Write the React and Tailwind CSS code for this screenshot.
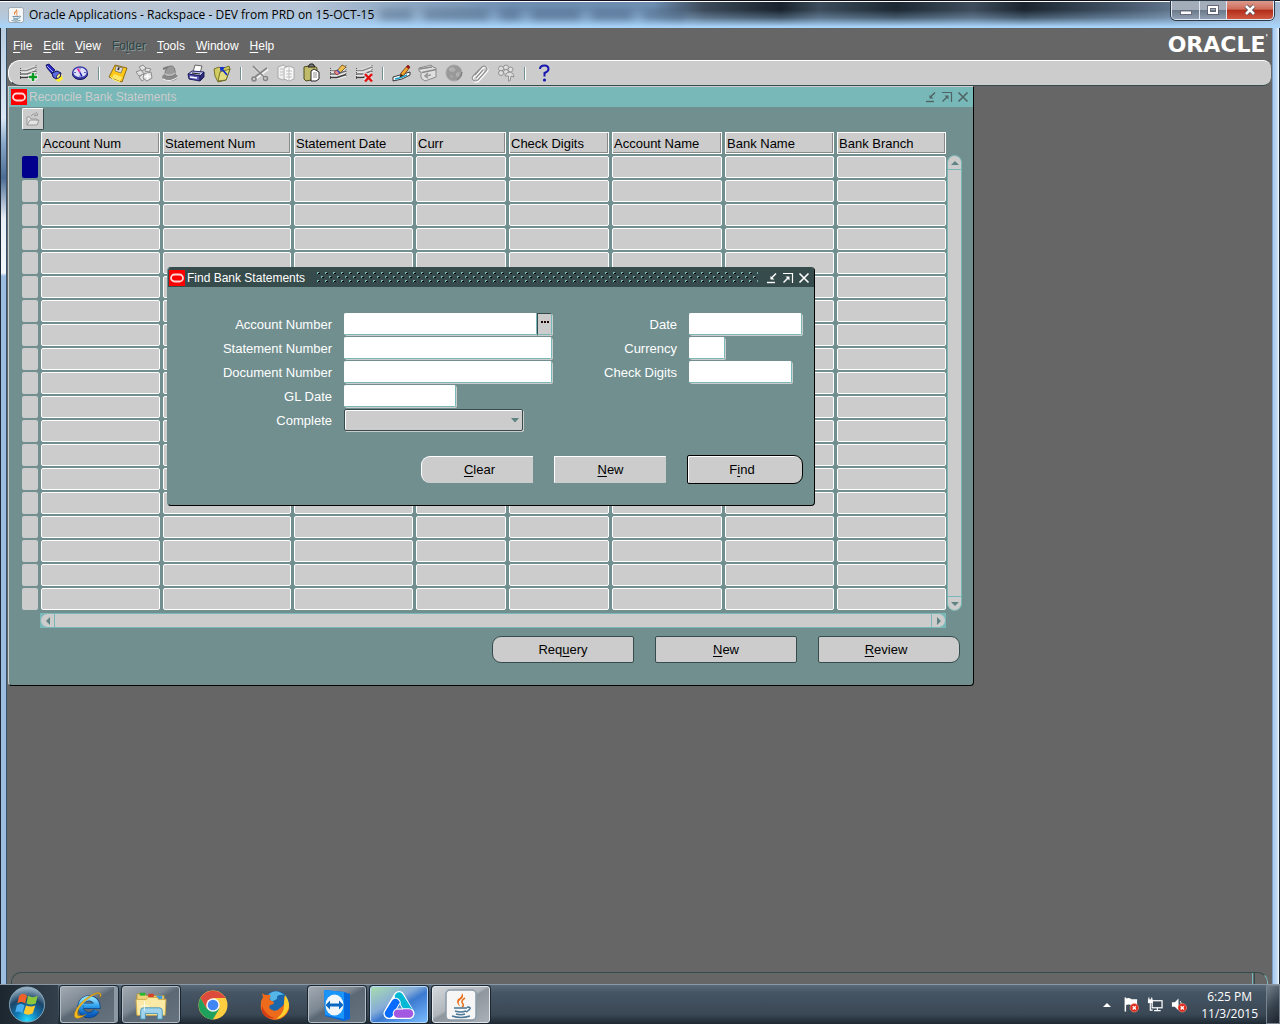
import React from "react";

const svgProps = { viewBox: "0 0 20 20", className: "block h-5 w-5", "aria-hidden": true };

/* ---------- toolbar icons ---------- */
const Sheet = () => (
  <g>
    <path d="M2 6 L10 5.500 L18 2 V14 L11 16 H2Z" fill="#e8e8e8" />
    <path d="M2 7.500H9L18 4" stroke="#8c8c8c" strokeWidth="1.600" fill="none" />
    <path d="M2 11H9L18 8" stroke="#6e6e6e" strokeWidth="1.600" fill="none" />
    <path d="M2 14.500H9L18 11.500" stroke="#3c3c3c" strokeWidth="1.600" fill="none" />
    <path d="M2.500 5V17" stroke="#555" strokeDasharray="1 1" />
    <path d="M18 2V14" stroke="#666" strokeDasharray="1 1" />
  </g>
);
const ICONS = {
  New: (
    <svg {...svgProps}>
      <Sheet />
      <path d="M15 9.500V18.500M10.500 14H19.500" stroke="#fff" strokeWidth="4.500" />
      <path d="M15 10V18M11 14H19" stroke="#0a9a22" strokeWidth="2.600" />
    </svg>
  ),
  Find: (
    <svg {...svgProps}>
      <path d="M11 17L17 11L19 16L15 19Z" fill="#ffee30" />
      <path d="M2 2L5 1L11 7L8 11L3 5Z" fill="#2828c0" stroke="#10105a" strokeWidth=".8" />
      <path d="M8 10L13 8L17 10L16 14L12 16L9 14Z" fill="#5a6ae0" stroke="#10105a" />
      <path d="M3 3L9 9" stroke="#aab4ff" />
      <ellipse cx="14.500" cy="13" rx="2.800" ry="1.500" transform="rotate(-50 14.500 13)" fill="#fff27a" stroke="#10105a" strokeWidth=".7" />
    </svg>
  ),
  Navigator: (
    <svg {...svgProps}>
      <ellipse cx="10" cy="11" rx="7.500" ry="5.500" fill="#3434a0" stroke="#15155c" />
      <ellipse cx="10" cy="9.500" rx="7.200" ry="5.500" fill="#dce0fa" stroke="#3a3aa6" strokeWidth="1.300" />
      <path d="M10 4.500V6.500M10 12.500V14.500M4 9.500H6M14 9.500H16" stroke="#5a60b8" />
      <path d="M7.500 5.500L10 9.500" stroke="#e030a0" strokeWidth="1.800" />
      <path d="M10 9.500L12 13.500" stroke="#2020b0" strokeWidth="1.600" />
    </svg>
  ),
  Save: (
    <svg {...svgProps}>
      <path d="M7 2L19 5L14 19L1 14Z" fill="#ffc818" stroke="#7a5500" strokeWidth=".8" />
      <path d="M8 3L15 5L13 10L7 8Z" fill="#d8d8d8" stroke="#555" strokeWidth=".6" />
      <path d="M11 4.500L10 7" stroke="#222" strokeWidth="1.600" />
      <path d="M6 11L14 14L12 18L4 15Z" fill="#ffe868" />
      <path d="M2 13L6 17L12 19" stroke="#fff060" fill="none" />
    </svg>
  ),
  "Next Step": (
    <svg {...svgProps}>
      <g fill="#e2e2e2" stroke="#8d8d8d">
        <path d="M5 4L9 2L12 5L8 8Z" /><path d="M12 5L17 6L15 9L11 8Z" />
        <path d="M2 9L7 7L10 11L5 13Z" /><path d="M5 14L9 11L12 15L8 18Z" /><path d="M10 11L17 9L18 15L13 18L9 15Z" />
      </g>
      <path d="M10.500 13.500H16.500M13.500 10.500V16.500" stroke="#fff" strokeWidth="1.600" />
    </svg>
  ),
  "Switch Responsibility": (
    <svg {...svgProps}>
      <ellipse cx="10" cy="14" rx="8" ry="4" fill="#8a8a8a" />
      <path d="M5 12Q5 4 10 3Q16 2 15 12Q12 15 5 12Z" fill="#9a9a9a" stroke="#7a7a7a" />
      <path d="M5 11Q10 14 15 10" stroke="#bcbcbc" strokeWidth="1.500" fill="none" />
      <path d="M3 16Q10 20 18 14" stroke="#f2f2f2" fill="none" /><path d="M3 6L8 4" stroke="#7a7a7a" strokeWidth="2" />
    </svg>
  ),
  Print: (
    <svg {...svgProps}>
      <path d="M7 9L9 2L16 3L14 10Z" fill="#fff" stroke="#444" strokeWidth=".8" />
      <path d="M2 11L6 8L18 9L15 13Z" fill="#bcc0e8" stroke="#26266e" />
      <path d="M2 11L14 13V18L3 16Z" fill="#5858b4" stroke="#1c1c5c" />
      <path d="M14 13L18 9V14L14 18Z" fill="#2c2c78" stroke="#1c1c5c" />
      <path d="M4 14L11 15" stroke="#fff" strokeWidth="1.400" /><path d="M6 10L14 11" stroke="#222" />
    </svg>
  ),
  "Close Form": (
    <svg {...svgProps}>
      <path d="M2 6L7 4L9 6L17 3L18 6L14 17L6 19L3 13Z" fill="#d2cc60" stroke="#605c18" strokeWidth=".8" />
      <path d="M6 18L8 9L18 6L14 17Z" fill="#e2dc7c" stroke="#605c18" strokeWidth=".8" />
      <path d="M15 12L10 6" stroke="#1030d0" strokeWidth="1.800" /><path d="M8 4H13L8.500 9Z" fill="#1030d0" />
    </svg>
  ),
  Cut: (
    <svg {...svgProps}>
      <path d="M3 3L14 14M17 5L5 14" stroke="#f4f4f4" strokeWidth="2.500" transform="translate(1 1)" />
      <path d="M3 3L14 14M17 5L5 14" stroke="#858585" strokeWidth="1.700" />
      <circle cx="15.500" cy="15.500" r="2" fill="none" stroke="#858585" strokeWidth="1.500" />
      <circle cx="4" cy="16" r="2" fill="none" stroke="#858585" strokeWidth="1.500" />
    </svg>
  ),
  Copy: (
    <svg {...svgProps}>
      <path d="M2 4L7 2L11 4V15L7 17L2 15Z" fill="#f0f0f0" stroke="#9a9a9a" strokeWidth=".8" />
      <path d="M8 5L13 3L18 5V16L13 18L8 16Z" fill="#f8f8f8" stroke="#9a9a9a" strokeWidth=".8" />
      <path d="M4 6H7M4 9H7M4 12H7M10 8H16M10 11H16M10 14H16M13 4V17" stroke="#b4b4b4" strokeWidth=".8" />
    </svg>
  ),
  Paste: (
    <svg {...svgProps}>
      <path d="M2 4L11 2L15 5L14 16L4 18L2 16Z" fill="#c0bb68" stroke="#4c4a20" />
      <path d="M6 4L8 1H11L13 4Z" fill="#777" stroke="#222" />
      <path d="M9 8L12 6L17 9V16L14 18H9Z" fill="#fff" stroke="#222" />
      <path d="M11 10H15M11 12H15M11 14H15" stroke="#777" strokeWidth=".8" />
    </svg>
  ),
  "Clear Record": (
    <svg {...svgProps}>
      <Sheet />
      <path d="M8 9L14 2L18 4L11 11Z" fill="#f0bd50" stroke="#6b4a18" strokeWidth=".8" />
      <path d="M6 9L9 7L12 10L9 12Z" fill="#e88a8a" stroke="#883a3a" strokeWidth=".8" /><path d="M9 7L12 10" stroke="#3050c0" strokeWidth="1.500" />
    </svg>
  ),
  Delete: (
    <svg {...svgProps}>
      <Sheet />
      <path d="M10 10L18 18M18 10L10 18" stroke="#ddd" strokeWidth="4" />
      <path d="M11 11L18 18.500M18 11L11 18.500" stroke="#e01010" strokeWidth="2.400" />
    </svg>
  ),
  "Edit Field": (
    <svg {...svgProps}>
      <path d="M1 14L8 12L18 9V12L10 16L1 18Z" fill="#fff" stroke="#222" strokeWidth=".9" />
      <path d="M3 16L9 14.500L15 12" stroke="#1aa0cc" strokeWidth="1.400" fill="none" />
      <path d="M8 14L9 10L16 2L18 4L12 12Z" fill="#f4a52e" stroke="#5a3210" strokeWidth=".8" />
      <path d="M14 4L16 2L18 4L16.500 6Z" fill="#a01818" /><path d="M8 14L9 11L11 12.500Z" fill="#222" />
    </svg>
  ),
  Zoom: (
    <svg {...svgProps}>
      <path d="M1 5L13 2L15 4L18 5V14L7 18L3 15V9L1 8Z" fill="#e0e0e0" stroke="#8a8a8a" />
      <path d="M1 6L14 4M4 9.500L18 6.500" stroke="#8a8a8a" strokeWidth="1.600" /><path d="M7 13L13 12M10 10L7 13L10 15" stroke="#999" strokeWidth="1.600" fill="none" />
    </svg>
  ),
  Translations: (
    <svg {...svgProps}>
      <circle cx="10" cy="10" r="8" fill="#999" stroke="#a8a8a8" />
      <path d="M5 5L9 4L12 7L9 9L5 8Z M12 10L16 9L15 13L12 14Z" fill="#b0b0b0" /><path d="M6 12L9 13L8 16Z" fill="#acacac" />
      <path d="M13 17Q18 14 18 9" stroke="#7a7a7a" fill="none" />
    </svg>
  ),
  Attachments: (
    <svg {...svgProps}>
      <path d="M5 12L12 4Q14 2 16 4Q18 6 16 8L8 17Q5 19 3 17Q1 15 4 12L11 5M6 15L13 7" fill="none" stroke="#fff" strokeWidth="2" transform="translate(.6 .8)" />
      <path d="M5 12L12 4Q14 2 16 4Q18 6 16 8L8 17Q5 19 3 17Q1 15 4 12L11 5M6 15L13 7" fill="none" stroke="#909090" strokeWidth="1.200" />
    </svg>
  ),
  "Folder Tools": (
    <svg {...svgProps}>
      <g fill="#dedede" stroke="#8c8c8c" strokeWidth=".9">
        <circle cx="5" cy="5.500" r="2.500" /><circle cx="10" cy="4.500" r="2.500" /><circle cx="14.500" cy="6.500" r="2.500" />
        <circle cx="5" cy="10" r="2.500" /><circle cx="10" cy="9" r="2.500" />
        <path d="M9 13Q10 9 14 9Q18 10 18 14L15 13L14 18H12.500V13Z" />
      </g>
    </svg>
  ),
  Help: (
    <svg {...svgProps}>
      <path d="M6 6Q6 2.500 10.500 2.500Q14.500 2.500 14.500 6Q14.500 8.500 10.500 10V13.500" fill="none" stroke="#1818b0" strokeWidth="2" />
      <circle cx="10.500" cy="17" r="1.600" fill="#1818b0" />
    </svg>
  ),
};
const TOOL_GROUPS = [
  ["New", "Find", "Navigator"],
  ["Save", "Next Step", "Switch Responsibility", "Print", "Close Form"],
  ["Cut", "Copy", "Paste", "Clear Record", "Delete"],
  ["Edit Field", "Zoom", "Translations", "Attachments", "Folder Tools"],
  ["Help"],
];

/* ---------- shared pieces ---------- */
const JavaCup = ({ className }) => (
  <svg viewBox="0 0 32 32" className={className} aria-hidden="true">
    <rect x="1" y="1" width="30" height="30" rx="4" fill="#f6f6f6" stroke="#8a99a8" strokeWidth="1.500" />
    <path d="M17 4Q20 8 15 11Q12 14 16 18Q10 14 13 10Q17 8 17 4Z" fill="#e8701a" />
    <path d="M20 9Q15 12 18 15Q19 17 17 18" fill="none" stroke="#e8701a" strokeWidth="1.500" />
    <path d="M9 19H22M10 22Q16 24 21 22M11 25Q16 26.500 20 25M7 27Q16 30 25 27M22 18Q27 18 24 21Q23 22 21 23" fill="none" stroke="#4a7896" strokeWidth="1.500" />
  </svg>
);

const OracleBadge = () => (
  <svg viewBox="0 0 16 16" className="h-4 w-4 shrink-0" aria-hidden="true">
    <rect width="16" height="16" fill="#f00" />
    <rect x="2" y="4.500" width="12" height="7" rx="3.500" fill="none" stroke="#ffd8d8" strokeWidth="1.800" />
  </svg>
);

const WindowControls = ({ className }) => (
  <div className={`flex gap-1 ${className}`}>
    <button type="button" aria-label="Minimize">
      <svg viewBox="0 0 12 12" className="h-3 w-3"><path d="M1 10.500H9" stroke="currentColor" strokeWidth="1.400" /><path d="M10 1.500L5 6.500" stroke="currentColor" strokeWidth="1.400" /><path d="M4.500 4V7.500H8.500Z" fill="currentColor" /></svg>
    </button>
    <button type="button" aria-label="Maximize">
      <svg viewBox="0 0 12 12" className="h-3 w-3"><path d="M1 1.500H10.500V11" fill="none" stroke="currentColor" strokeWidth="1.200" /><path d="M1.500 10.500L6 6" stroke="currentColor" strokeWidth="1.400" /><path d="M3.500 4.500H7.500V8.500Z" fill="currentColor" /></svg>
    </button>
    <button type="button" aria-label="Close">
      <svg viewBox="0 0 12 12" className="h-3 w-3"><path d="M1.500 1.500L10.500 10.500M10.500 1.500L1.500 10.500" stroke="currentColor" strokeWidth="1.600" /></svg>
    </button>
  </div>
);

const Mnemonic = ({ text, at }) => (
  <span>{text.slice(0, at)}<u className="underline underline-offset-2">{text[at]}</u>{text.slice(at + 1)}</span>
);

/* ---------- title bar ---------- */
function TitleBar() {
  return (
    <header className="relative flex h-7 items-start border-t border-[#10101c] bg-[linear-gradient(90deg,#b9c5d2_0%,#b4c4d6_24%,#8fa9c4_31%,#6f8fb2_40%,#6f8fb2_51%,#3c4a5a_55%,#18222c_61%,#3c4c5c_64%,#1c2832_70%,#3e4c5c_76%,#1a242e_80%,#46586c_88%,#6c8198_93%,#a4bad4_100%)] font-['Open_Sans',sans-serif]">
      <div className="absolute inset-0 border-t border-white bg-[linear-gradient(180deg,transparent_30%,rgba(168,212,250,0.3)_60%,#a8d4fa_95%)]" />
      <div className="absolute top-[10px] left-[380px] flex gap-3 opacity-50 blur-[4px]" aria-hidden="true">
        <i className="h-2 w-8 bg-[#39506c]" /><i className="h-2 w-16 bg-[#39506c]" /><i className="h-2 w-5 bg-[#39506c]" />
        <i className="h-2 w-12 bg-[#39506c]" /><i className="h-2 w-10 bg-[#39506c]" /><i className="h-2 w-10 bg-[#39506c]" />
      </div>
      <div className="relative flex h-full flex-1 items-center gap-1 pl-2">
        <JavaCup className="h-4 w-4" />
        <h1 className="pl-px text-[12px] leading-4 whitespace-nowrap text-black">Oracle Applications - Rackspace - DEV from PRD on 15-OCT-15</h1>
      </div>
      <div className="relative mr-[6px] flex h-[19px] overflow-hidden rounded-b-[5px] border border-t-0 border-[#dfe8f2] shadow-[0_0_0_1px_#2b3846]">
        <button type="button" aria-label="Minimize window" className="flex w-7 items-center justify-center border-r border-[#dfe8f2] bg-[linear-gradient(#a3adba_48%,#6a7888_50%,#8fa0b2)]">
          <svg viewBox="0 0 12 12" className="h-3 w-3"><rect x=".5" y="7" width="11" height="3.500" fill="#fff" stroke="#556" strokeWidth=".8" /></svg>
        </button>
        <button type="button" aria-label="Restore window" className="flex w-[27px] items-center justify-center border-r border-[#dfe8f2] bg-[linear-gradient(#a3adba_48%,#6a7888_50%,#8fa0b2)]">
          <svg viewBox="0 0 12 10" className="h-[10px] w-3"><rect x="2" y="2" width="8" height="6" fill="none" stroke="#445" strokeWidth="3.600" /><rect x="2" y="2" width="8" height="6" fill="none" stroke="#fff" strokeWidth="2.200" /></svg>
        </button>
        <button type="button" aria-label="Close window" className="flex w-[46px] items-center justify-center bg-[linear-gradient(#dc9a8c_0%,#cf6a58_46%,#b22c18_50%,#d05840)]">
          <svg viewBox="0 0 12 12" className="h-3 w-3"><path d="M2 2L10 10M10 2L2 10" stroke="#445" strokeWidth="4" /><path d="M2 2L10 10M10 2L2 10" stroke="#fff" strokeWidth="2.600" /></svg>
        </button>
      </div>
    </header>
  );
}

/* ---------- menu and toolbar ---------- */
const MENUS = [["File", 0], ["Edit", 0], ["View", 0], ["Folder", 2], ["Tools", 0], ["Window", 0], ["Help", 0]];

function MenuBar() {
  return (
    <div className="flex h-8 items-center justify-between pr-1 pl-1.5">
      <nav className="flex gap-[11px] pt-1 text-[12px] leading-4 text-white">
        {MENUS.map(([text, at]) => (
          <button key={text} type="button" disabled={text === "Folder"} className="disabled:text-[#2f4444] disabled:[text-shadow:1px_1px_0_#8a9a9a]">
            <Mnemonic text={text} at={at} />
          </button>
        ))}
      </nav>
      <div className="flex items-start pt-px font-['DejaVu_Sans',sans-serif] text-[22px] leading-7 font-bold text-white">ORACLE<span className="text-[8px] leading-4">'</span></div>
    </div>
  );
}

function Toolbar() {
  return (
    <div role="toolbar" className="mr-px ml-px flex h-[26px] items-center rounded-l-xl rounded-r-lg border-t border-b border-l border-t-white border-b-[#364b4b] border-l-white bg-[#ccc] pl-1.5">
      {TOOL_GROUPS.map((group, i) => (
        <React.Fragment key={group[0]}>
          {i > 0 && <div className="flex w-3 justify-center"><span className="h-[13px] w-[2px] border-r border-white bg-[#718f8f]" /></div>}
          {group.map((name) => (
            <button key={name} type="button" aria-label={name} className="flex h-6 w-[26px] items-center justify-center">{ICONS[name]}</button>
          ))}
        </React.Fragment>
      ))}
    </div>
  );
}

/* ---------- Reconcile Bank Statements ---------- */
const COLUMNS = ["Account Num", "Statement Num", "Statement Date", "Curr", "Check Digits", "Account Name", "Bank Name", "Bank Branch"];
const COL_CLASSES = ["w-[119px]", "w-[128px]", "w-[119px]", "w-[90px]", "w-[100px]", "w-[110px]", "w-[109px]", "w-[109px]"];
const ROWS = Array.from({ length: 19 }, (_, i) => i);

const Arrow = ({ d }) => (
  <svg viewBox="0 0 10 10" className="h-[10px] w-[10px]" aria-hidden="true"><path d={d} fill="#5f8282" /></svg>
);

function ReconcileWindow() {
  return (
    <section className="ml-px flex w-[966px] flex-col rounded-b-[4px] border border-t-[#ccc] border-r-black border-b-black border-l-[#ccc] bg-[#718f8f]">
      <div className="flex h-5 items-center bg-[#78b8b8] pr-1 pl-0.5">
        <OracleBadge />
        <h2 className="flex-1 pl-0.5 text-[12px] leading-4 text-[#ccc]">Reconcile Bank Statements</h2>
        <WindowControls className="text-[#4f6464]" />
      </div>
      <div className="flex h-[23px] items-start pt-px pl-[13px]">
        <button type="button" aria-label="Open folder" className="flex h-[22px] w-[22px] items-center justify-center rounded-[2px] border border-t-white border-r-[#364b4b] border-b-[#364b4b] border-l-white bg-[#ccc]">
          <svg viewBox="0 0 16 16" className="h-4 w-4" aria-hidden="true"><path d="M2 14V6H5L6 8H12V10M2 14L5 9H14L12 14Z" fill="#e4e4e4" stroke="#999" /><path d="M6 5Q8 2 11 3M11 1L13 4L9 5" fill="none" stroke="#999" /></svg>
        </button>
      </div>
      <div className="flex pl-[10px]">
        <table className="w-[930px] table-fixed border-separate border-spacing-x-[3px] border-spacing-y-[2px]">
          <colgroup>
            <col className="w-[16px]" />
            {COLUMNS.map((c, i) => <col key={c} className={COL_CLASSES[i]} />)}
          </colgroup>
          <thead>
            <tr className="h-[22px]">
              <td className="p-0" />
              {COLUMNS.map((c) => (
                <th key={c} scope="col" className="border border-white bg-[#ccc] p-0 pt-px pl-px text-left text-[13px] leading-[19px] font-normal whitespace-nowrap text-black shadow-[inset_-1px_-1px_0_#8a8a8a]">{c}</th>
              ))}
            </tr>
          </thead>
          <tbody>
            {ROWS.map((r) => (
              <tr key={r}>
                <td className="p-0"><button type="button" aria-label={`Select record ${r + 1}`} className={r === 0 ? "block h-[22px] w-full rounded-[2px] bg-[#00008c]" : "block h-[22px] w-full rounded-[2px] bg-[#ccc]"} /></td>
                {COLUMNS.map((c) => (
                  <td key={c} className="p-0"><input type="text" aria-label={`${c}, record ${r + 1}`} className="block h-[22px] w-full rounded-[2px] border border-white bg-[#ccc] px-0.5 text-[13px]" /></td>
                ))}
              </tr>
            ))}
          </tbody>
        </table>
        <div className="mt-[25px] mb-px -ml-0.5 flex w-[15px] flex-col justify-between rounded-full border border-[#78b8b8] bg-[#ccc]">
          <button type="button" aria-label="Scroll up" className="flex h-[14px] items-center justify-center border-b border-[#78b8b8]"><Arrow d="M1 7H9L5 3Z" /></button>
          <button type="button" aria-label="Scroll down" className="flex h-[14px] items-center justify-center border-t border-[#78b8b8]"><Arrow d="M1 3H9L5 7Z" /></button>
        </div>
      </div>
      <div className="mt-px mr-[27px] ml-[31px] bg-[#78b8b8]">
        <div className="flex h-[15px] justify-between rounded-full border border-[#78b8b8] bg-[#ccc]">
          <button type="button" aria-label="Scroll left" className="flex w-[14px] items-center justify-center border-r border-[#78b8b8]"><Arrow d="M7 1V9L3 5Z" /></button>
          <button type="button" aria-label="Scroll right" className="flex w-[14px] items-center justify-center border-l border-[#78b8b8]"><Arrow d="M3 1V9L7 5Z" /></button>
        </div>
      </div>
      <div className="flex justify-end gap-[21px] pt-2 pr-[13px] pb-[22px] text-[13px] leading-5 text-black">
        <button type="button" className="h-[27px] w-[142px] rounded-l-[9px] rounded-r-[2px] border border-[#364b4b] bg-[#ccc]"><Mnemonic text="Requery" at={3} /></button>
        <button type="button" className="h-[27px] w-[142px] rounded-[2px] border border-[#364b4b] bg-[#ccc]"><Mnemonic text="New" at={0} /></button>
        <button type="button" className="h-[27px] w-[142px] rounded-l-[2px] rounded-r-[9px] border border-[#364b4b] bg-[#ccc] pr-1.5"><Mnemonic text="Review" at={0} /></button>
      </div>
    </section>
  );
}

/* ---------- Find Bank Statements ---------- */
const FIELD = "block h-[22px] rounded-[2px] border border-t-white border-r-[#78b8b8] border-b-[#78b8b8] border-l-white bg-white px-1 text-[13px] text-black shadow-[1px_1px_0_#ccc]";
const LABEL = "pt-0.5 text-right text-[13px] leading-5 text-white";

function FindDialog() {
  return (
    <section role="dialog" aria-label="Find Bank Statements" className="absolute top-[181px] left-[160px] w-[648px] rounded-[4px] border border-t-[#364b4b] border-r-black border-b-black border-l-[#718f8f] bg-[#718f8f]">
      <div className="flex h-[19px] items-center rounded-t-[3px] bg-[#364b4b] pr-1 pl-px text-white">
        <OracleBadge />
        <h2 className="pl-0.5 text-[12px] leading-4 whitespace-nowrap">Find Bank Statements</h2>
        <svg className="mr-2 ml-3 h-3 min-w-0 flex-1" aria-hidden="true">
          <defs>
            <pattern id="grip" width="8" height="8" patternUnits="userSpaceOnUse">
              <path d="M0 0h2v1h-1v1h-1zM4 4h2v1h-1v1h-1z" fill="#78b8b8" />
              <path d="M1 1h2v1h-2zM5 5h2v1h-2z" fill="#000" />
            </pattern>
          </defs>
          <rect width="100%" height="100%" fill="url(#grip)" />
        </svg>
        <WindowControls className="text-white" />
      </div>
      <form className="pt-[26px]" onSubmit={(e) => e.preventDefault()}>
        <div className="flex">
          <div className="grid grid-cols-[164px_208px] gap-x-3 gap-y-[2px]">
            <label htmlFor="account" className={LABEL}>Account Number</label>
            <div className="flex">
              <input id="account" type="text" className={`${FIELD} min-w-0 flex-1`} />
              <button type="button" aria-label="List of values" className="flex h-[22px] w-[15px] items-center justify-center gap-px rounded-r-[2px] border border-t-[#364b4b] border-r-[#78b8b8] border-b-[#78b8b8] border-l-[#364b4b] bg-[#ccc] pb-1 shadow-[1px_1px_0_#ccc]">
                <i className="h-[2px] w-[2px] bg-[#220000]" /><i className="h-[2px] w-[2px] bg-[#220000]" /><i className="h-[2px] w-[2px] bg-[#220000]" />
              </button>
            </div>
            <label htmlFor="statement" className={LABEL}>Statement Number</label>
            <input id="statement" type="text" className={`${FIELD} w-full`} />
            <label htmlFor="document" className={LABEL}>Document Number</label>
            <input id="document" type="text" className={`${FIELD} w-full`} />
            <label htmlFor="gldate" className={LABEL}>GL Date</label>
            <input id="gldate" type="text" className={`${FIELD} w-28`} />
            <label htmlFor="complete" className={LABEL}>Complete</label>
            <div className="relative w-[179px]">
              <select id="complete" defaultValue="" className="block h-[22px] w-full appearance-none rounded-[2px] border border-[#364b4b] bg-[#ccc] text-[13px] shadow-[inset_1px_1px_0_#fff,1px_1px_0_#ccc]">
                <option value="" />
                <option>Yes</option>
                <option>No</option>
              </select>
              <svg viewBox="0 0 8 5" className="pointer-events-none absolute top-[9px] right-1 h-[5px] w-2" aria-hidden="true"><path d="M0 0H8L4 4.500Z" fill="#5f8282" /></svg>
            </div>
          </div>
          <div className="grid flex-1 auto-rows-[22px] grid-cols-[125px_1fr] gap-x-3 gap-y-[2px]">
            <label htmlFor="date" className={LABEL}>Date</label>
            <input id="date" type="text" className={`${FIELD} w-[113px]`} />
            <label htmlFor="currency" className={LABEL}>Currency</label>
            <input id="currency" type="text" className={`${FIELD} w-9`} />
            <label htmlFor="digits" className={LABEL}>Check Digits</label>
            <input id="digits" type="text" className={`${FIELD} w-[103px]`} />
          </div>
        </div>
        <div className="flex items-center justify-end gap-[21px] pt-6 pr-[11px] pb-[21px] text-[13px] leading-5 text-black">
          <button type="reset" className="h-[27px] w-28 rounded-l-[9px] border border-r-0 border-b-0 border-white bg-[#ccc] pl-1"><Mnemonic text="Clear" at={0} /></button>
          <button type="button" className="h-[27px] w-28 rounded-[1px] border border-r-0 border-b-0 border-white bg-[#ccc]"><Mnemonic text="New" at={0} /></button>
          <button type="submit" className="h-[29px] w-[116px] rounded-l-[2px] rounded-r-[9px] border border-black bg-[#ccc] pr-1.5 shadow-[inset_1px_1px_0_#fff]"><Mnemonic text="Find" at={1} /></button>
        </div>
      </form>
    </section>
  );
}

/* ---------- taskbar ---------- */
const APP_ICONS = {
  "Internet Explorer": (
    <svg viewBox="0 0 32 32" className="h-[30px] w-[30px]" aria-hidden="true">
      <defs><linearGradient id="ie" x1="0" y1="0" x2="0" y2="1"><stop offset="0" stopColor="#8fe0ff" /><stop offset=".5" stopColor="#2a9ae8" /><stop offset="1" stopColor="#0a58b8" /></linearGradient></defs>
      <path d="M25 22A9 9 0 1 1 26 17H11" fill="none" stroke="#0b3f80" strokeWidth="6.500" />
      <path d="M25 22A9 9 0 1 1 26 17H11" fill="none" stroke="url(#ie)" strokeWidth="5" />
      <path d="M30 6Q30 0 20 5Q6 13 2 24Q0 31 6 30Q10 29 14 26Q7 29 5 27Q3 21 14 11Q25 2 28 4Q29 4 29 8Z" fill="#f7bd1c" stroke="#b97a08" strokeWidth=".5" />
    </svg>
  ),
  "Windows Explorer": (
    <svg viewBox="0 0 34 32" className="h-[30px] w-8" aria-hidden="true">
      <path d="M3 4H11L12 6H31V26H2V5Z" fill="#eed27c" stroke="#b48f38" />
      <rect x="5" y="3" width="6" height="3" fill="#25b52c" /><rect x="14" y="4" width="6" height="4" fill="#d8402c" /><rect x="23" y="6" width="6" height="4" fill="#3a9ae8" />
      <path d="M1 10H12L14 8H24L25 10H33L32 27H2Z" fill="#f9e9a4" stroke="#cba94a" />
      <path d="M6 31V22Q6 19 9 19H26Q29 19 29 22V31H24V25H11V31Z" fill="#9fd4ec" stroke="#4a94bc" />
      <path d="M10 12V22M5 17H15" stroke="#fff" strokeWidth=".8" />
    </svg>
  ),
  Chrome: (
    <svg viewBox="0 0 32 32" className="h-8 w-8" aria-hidden="true">
      <circle cx="16" cy="16" r="14.500" fill="#ffcd40" />
      <path d="M16 16L9.500 19.800L3.500 9A14.500 14.500 0 0 1 28.600 9H16Z" fill="#dd4b3c" />
      <path d="M3.500 9A14.500 14.500 0 0 0 15.800 30.500L22.500 19.500L16 16L9.500 19.500Z" fill="#1fa15d" />
      <circle cx="16" cy="16" r="6.800" fill="#f4f4f4" /><circle cx="16" cy="16" r="5.300" fill="#4285f4" />
    </svg>
  ),
  Firefox: (
    <svg viewBox="0 0 32 32" className="h-8 w-8" aria-hidden="true">
      <circle cx="17" cy="15" r="13" fill="#1c66ac" /><path d="M10 5Q17 -1 25 6Q17 5 18 10L12 13Z" fill="#54b7e8" />
      <path d="M3 4Q5 6 7 6Q10 5 12 7Q10 9 11 11L15 13Q15 16 11 16Q9 19 13 21Q18 23 21 19Q27 16 25 7Q31 13 30 20Q27 30 16 31Q5 30 2 20Q1 12 4 8Z" fill="#ed6b1b" />
      <path d="M26 6Q32 14 29 21Q25 29 17 30Q26 24 25 14Z" fill="#ffd02e" /><path d="M3 17Q7 27 16 29Q7 31 3 23Z" fill="#d43d16" />
    </svg>
  ),
  TeamViewer: (
    <svg viewBox="0 0 30 32" className="h-8 w-[30px]" aria-hidden="true">
      <path d="M2 1L22 3L28 5V30L22 32L3 27Z" fill="#0568dd" /><path d="M2 1L22 3V30L3 26Z" fill="#1a95fa" />
      <ellipse cx="12.500" cy="16" rx="9" ry="10.500" fill="#f4f7fa" />
      <path d="M3.500 16L8 11.500V14.500H17V11.500L21.500 16L17 20.500V17.500H8V20.500Z" fill="#0868c4" />
    </svg>
  ),
  "Screen Tool": (
    <svg viewBox="0 0 32 30" className="h-[30px] w-8" aria-hidden="true">
      <path d="M16 6.500L26 23.500H6Z" fill="#fff" stroke="#fff" strokeWidth="11" strokeLinejoin="round" />
      <path d="M16 6.500L26 22" stroke="#05b9d4" strokeWidth="8.500" strokeLinecap="round" />
      <path d="M12.500 13L6 23.500" stroke="#fff" strokeWidth="10.500" strokeLinecap="round" />
      <path d="M12.500 13L6 23.500" stroke="#0a6cff" strokeWidth="8.500" strokeLinecap="round" />
      <path d="M15 23.500H26" stroke="#fff" strokeWidth="10.500" strokeLinecap="round" />
      <path d="M15 23.500H26" stroke="#a258e0" strokeWidth="8.500" strokeLinecap="round" />
      <path d="M16.500 13.500L20 19H13.500Z" fill="#528cd8" stroke="#fff" />
    </svg>
  ),
  "Oracle Applications": <JavaCup className="h-8 w-8" />,
};
const GLASS = "border border-[#b4bcc4] shadow-[0_0_0_1px_#1c2630] bg-[linear-gradient(150deg,#a2aab2_0%,#7c8792_40%,#5c6874_50%,#66727e_100%)]";
const ACTIVE = "border border-[#b8dcff] shadow-[0_0_0_1px_#1c2630] bg-[linear-gradient(150deg,#a9dcae_0%,#86acd8_40%,#3c7ad0_55%,#78baff_100%)]";
const LIGHT = "border border-[#e4e8ec] shadow-[0_0_0_1px_#1c2630] bg-[linear-gradient(150deg,#d4d8dc_0%,#b0b6bc_45%,#8e969e_50%,#a9b0b8_100%)]";
const TASKS = [
  ["Internet Explorer", `${GLASS} border-r-4 border-r-[#8c98a4]`], ["Windows Explorer", GLASS], ["Chrome", ""], ["Firefox", ""],
  ["TeamViewer", GLASS], ["Screen Tool", ACTIVE], ["Oracle Applications", LIGHT],
];

const RedX = () => (
  <g><circle cx="12" cy="12" r="4.500" fill="#e02818" stroke="#f6a59a" strokeWidth=".6" /><path d="M10.300 10.300L13.700 13.700M13.700 10.300L10.300 13.700" stroke="#fff" strokeWidth="1.500" /></g>
);

function Taskbar() {
  return (
    <footer className="flex h-10 items-stretch border-t border-[#8a97a4] bg-[linear-gradient(180deg,#5b6a79_0%,#465563_20%,#3a4856_75%,#1e2932_100%)] font-['Open_Sans',sans-serif] text-white">
      <div className="flex w-[58px] items-center bg-[linear-gradient(90deg,#1c262f,#33404c)] pl-2">
        <button type="button" aria-label="Start">
          <svg viewBox="0 0 38 38" className="h-[37px] w-[38px]" aria-hidden="true">
            <defs><radialGradient id="orb" cx=".5" cy=".95" r=".95"><stop offset="0" stopColor="#22dcff" /><stop offset=".35" stopColor="#1277b4" /><stop offset=".65" stopColor="#1b4568" /><stop offset="1" stopColor="#a6bccb" /></radialGradient></defs>
            <circle cx="19" cy="19" r="18" fill="url(#orb)" stroke="#84a8bc" />
            <path d="M11 10Q15 6 19 10L17 18Q13 15 9 18Z" fill="#f0602a" /><path d="M20 10Q25 13 30 10L28 18Q23 20 18.500 18Z" fill="#8cc83c" />
            <path d="M8.500 20Q13 17 16.500 20L14 28Q11 25 7 27Z" fill="#46aef0" /><path d="M18 20Q23 22 27.500 20L25 28Q20 31 15.500 28Z" fill="#fdcb30" />
          </svg>
        </button>
      </div>
      <div className="flex gap-1 pt-px pl-0.5">
        {TASKS.map(([name, look]) => (
          <button key={name} type="button" aria-label={name} className={`flex h-[37px] w-[58px] items-center justify-center rounded-[3px] ${look}`}>{APP_ICONS[name]}</button>
        ))}
      </div>
      <div className="ml-auto flex items-center">
        <button type="button" aria-label="Show hidden icons" className="mr-3"><svg viewBox="0 0 8 4" className="h-1 w-2"><path d="M0 4L4 0L8 4Z" fill="#fff" /></svg></button>
        <div className="flex gap-2">
          <svg viewBox="0 0 17 17" className="h-[17px] w-4" aria-hidden="true"><path d="M2.500 1V16" stroke="#fff" strokeWidth="1.600" /><path d="M3 2Q7 1 9 3H15V9Q11 8 9 9Q6 8 3 9Z" fill="#fff" /><RedX /></svg>
          <svg viewBox="0 0 17 17" className="h-[17px] w-4" aria-hidden="true"><rect x="5.500" y="4.500" width="10.500" height="7.500" fill="#3a4856" stroke="#fff" strokeWidth="1.300" /><path d="M7.500 15H14.500M11 12V15M2 1V4M5 1V4M3.500 6V14.500H6" stroke="#fff" strokeWidth="1.200" fill="none" /><rect x="1" y="3" width="5" height="4" fill="#fff" /></svg>
          <svg viewBox="0 0 17 17" className="h-[17px] w-4" aria-hidden="true"><path d="M1 6H4L8 2V15L4 11H1Z" fill="#fff" /><path d="M10 5Q12 8 10 11" stroke="#fff" fill="none" /><RedX /></svg>
        </div>
        <div className="mr-2 ml-[14px] text-center text-[12px] leading-[17px]"><div>6:25 PM</div><div>11/3/2015</div></div>
      </div>
      <button type="button" aria-label="Show desktop" className="w-[14px] border border-[#78838e] bg-[linear-gradient(135deg,#74808c,#3a4652_50%,#1c242c)]" />
    </footer>
  );
}

export default function App() {
  return (
    <div className="flex min-h-screen flex-col bg-[#666] font-['Liberation_Sans',Arial,sans-serif]">
      <TitleBar />
      <div className="flex flex-1">
        <div className="w-[7px] shrink-0 border-r border-l border-r-[#35506a] border-l-[#1c2836] bg-[linear-gradient(180deg,#b8cce0_0,#dce8f4_90px,#8aa8c8_115px,#4c6c94_150px,#e8eef6_190px,#f4f8fc_245px,#9cbce0_248px,#9cbce0_100%)]" />
        <main className="flex min-w-0 flex-1 flex-col">
          <MenuBar />
          <Toolbar />
          <div className="relative flex-1">
            <ReconcileWindow />
            <FindDialog />
          </div>
          <div className="mr-1 ml-1 flex h-3 justify-end rounded-t-[10px] border-t border-r border-l border-t-[#364b4b] border-r-[#78b8b8] border-l-[#364b4b] pr-3">
            <span className="h-full w-[3px] border-r border-l border-r-[#364b4b] border-l-[#78b8b8]" />
          </div>
        </main>
        <div className="w-2 shrink-0 border-r border-l border-r-[#1c2836] border-l-[#78a0c8] bg-[linear-gradient(90deg,#a8c8ec,#c4dcf6_70%,#fff)]" />
      </div>
      <Taskbar />
    </div>
  );
}
